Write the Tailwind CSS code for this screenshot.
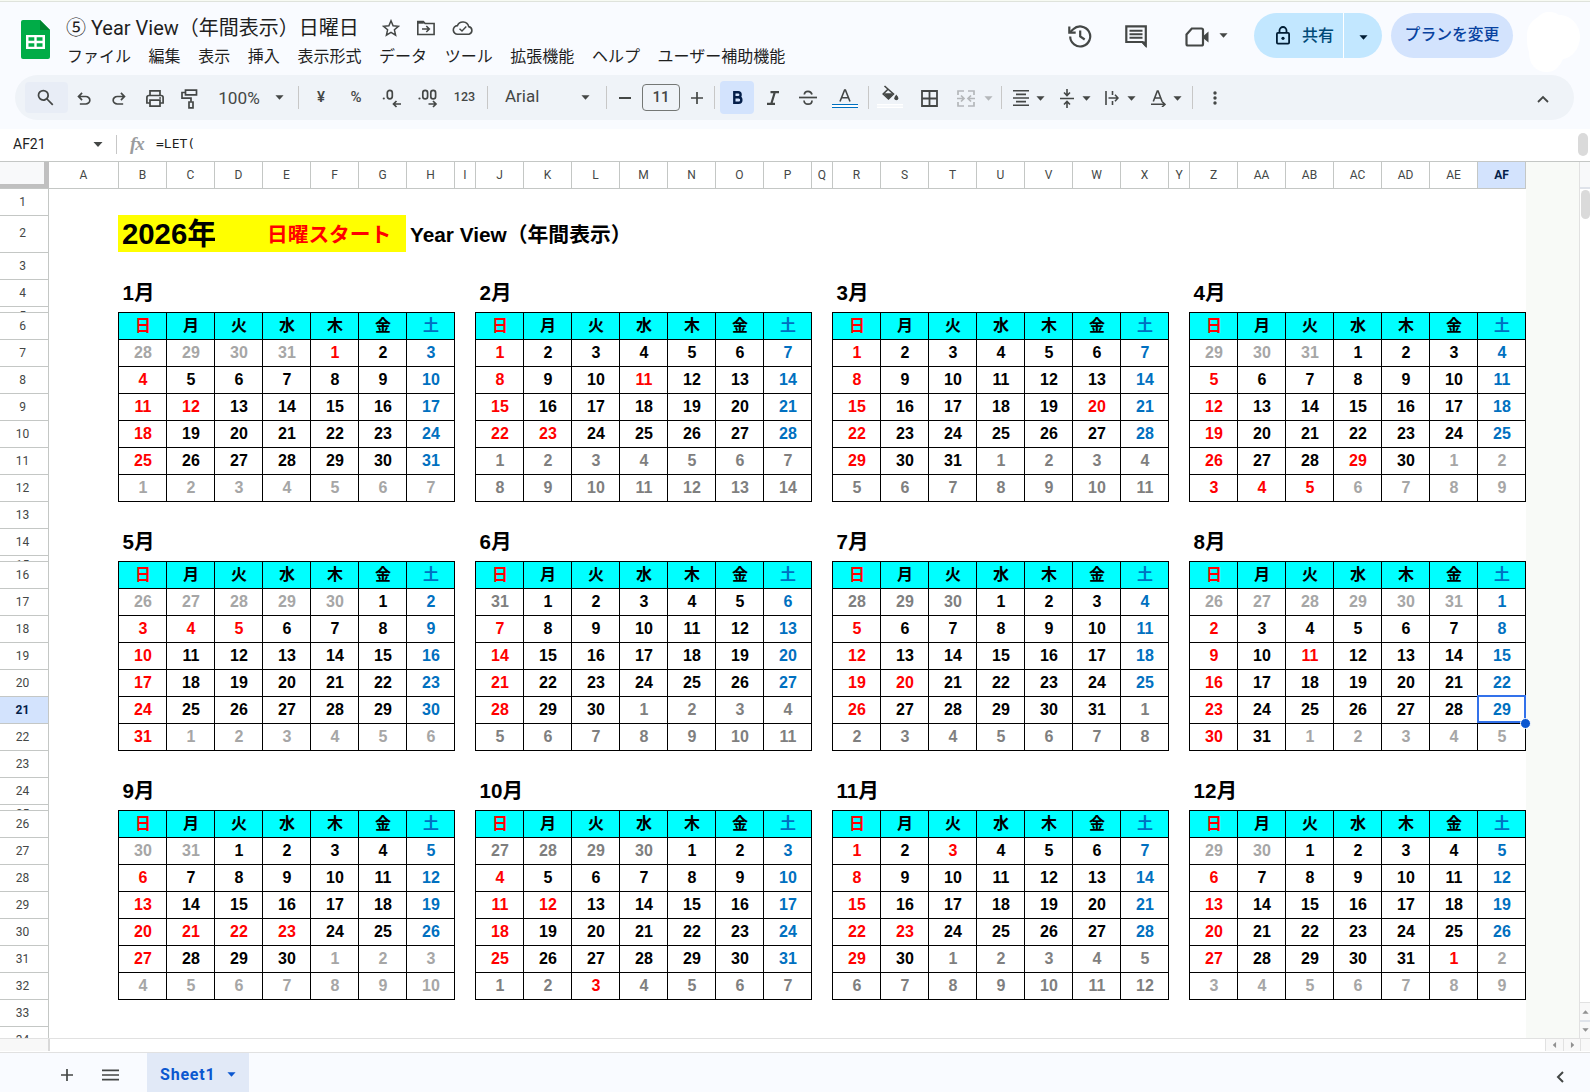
<!DOCTYPE html>
<html lang="ja">
<head>
    <meta charset="UTF-8">
    <meta name="viewport" content="width=device-width, initial-scale=1.0">
    <title>⑤ Year View（年間表示）日曜日</title>
    <script src="https://cdn.jsdelivr.net/npm/@tailwindcss/browser@4"></script>
</head>
<body class="w-[1590px] h-[1092px] overflow-hidden flex flex-col bg-[#f9fbff] text-[#444746] font-[Roboto,'Noto_Sans_CJK_JP',sans-serif]">
    <!-- Shared icon shapes -->
    <svg class="hidden">
        <symbol id="caret" viewBox="0 0 10 5"><path d="M0.5 0h9L5 5z" fill="currentColor"/></symbol>
    </svg>

    <!-- Title and menus -->
    <header class="h-[75px] shrink-0 border-t border-[#f7faf3] flex">
        <div class="w-full border-t border-[#dfe3dc] flex items-start">
            <svg class="ml-[21px] mt-[18px] w-[29px] h-[39px] shrink-0" viewBox="0 0 29 39">
                <path d="M2 0h17l10 10v27a2 2 0 0 1-2 2H2a2 2 0 0 1-2-2V2a2 2 0 0 1 2-2z" fill="#00ac47"/>
                <path d="M19 0l10 10H19z" fill="#00832d"/>
                <path d="M5 15h19v14H5zM7.500 17.200v3.600h5.800v-3.600zM15.700 17.200v3.600h5.800v-3.600zM7.500 23.200v3.600h5.800v-3.600zM15.700 23.200v3.600h5.800v-3.600z" fill="#fff" fill-rule="evenodd"/>
            </svg>
            <div class="ml-[16px] mt-[11px] flex flex-col">
                <div class="flex items-center h-[30px]">
                    <h1 class="w-[310px] text-[20px] leading-[30px] text-[#1f1f1f] whitespace-nowrap">⑤ Year View（年間表示）日曜日</h1>
                    <svg class="ml-[6px] w-[18px] h-[18px]" viewBox="0 0 18 18" fill="none" stroke="currentColor" stroke-width="1.500"><path d="M9 1.800l2.100 5 5.300.5-4 3.500 1.200 5.300L9 13.300l-4.600 2.800 1.200-5.300-4-3.500 5.300-.5z"/></svg>
                    <svg class="ml-[16px] w-[20px] h-[18px]" viewBox="0 0 20 18" fill="none" stroke="currentColor" stroke-width="1.600"><path d="M1.800 2.500h5.500l1.800 2h9v11H1.800z"/><path d="M1.800 3.700h6" stroke-width="2"/><path d="M6 10h7M10.300 7l3 3-3 3"/></svg>
                    <svg class="ml-[16px] w-[22px] h-[16px]" viewBox="0 0 22 16" fill="none" stroke="currentColor" stroke-width="1.600"><path d="M5.800 14.200a4.300 4.300 0 0 1-.4-8.600A6 6 0 0 1 16.700 6.600a3.900 3.900 0 0 1 .3 7.600z"/><path d="M7.500 8.700l2.500 2.400 4.300-4.500" stroke-width="1.400"/></svg>
                </div>
                <nav class="flex gap-[17.600px] pl-px pt-px text-[16px] leading-[26px] text-[#1f1f1f] whitespace-nowrap">
                    <span>ファイル</span><span>編集</span><span>表示</span><span>挿入</span><span>表示形式</span><span>データ</span><span>ツール</span><span>拡張機能</span><span>ヘルプ</span><span>ユーザー補助機能</span>
                </nav>
            </div>
            <div class="ml-auto flex items-center h-[45px] mt-[11px]">
                <svg class="w-[24px] h-[24px]" viewBox="0 0 24 24" fill="none" stroke="currentColor" stroke-width="2.200"><path d="M2.200 12.500a10 10 0 1 0 3-7.200L2 8.300"/><path d="M1.300 2.500v6.200h6.400"/><path d="M12.200 6.500v6l4.500 3"/></svg>
                <svg class="ml-[32px] w-[24px] h-[24px]" viewBox="0 0 24 24" fill="none" stroke="currentColor" stroke-width="2.200"><path d="M2.300 2.300h19.500v19L18.500 18H2.300z"/><path d="M21.800 23.500v-6h-5z" fill="currentColor" stroke="none"/><path d="M5.500 6.700h13M5.500 10.200h13M5.500 13.700h13" stroke-width="1.900"/></svg>
                <svg class="ml-[37px] mt-[2px] w-[24px] h-[20px]" viewBox="0 0 24 20" fill="none" stroke="currentColor" stroke-width="2.200"><path d="M1.500 7.500l5.300-6h9.700q1.500 0 1.500 1.500v14q0 1.500-1.500 1.500H3q-1.500 0-1.500-1.500z"/><path d="M18 9.200l5.500-4.700v11L18 11z" fill="currentColor" stroke="none"/></svg>
                <svg class="ml-[10px] w-[9px] h-[5px]"><use href="#caret"/></svg>
                <div class="ml-[26px] h-[45px] w-[128px] flex rounded-full bg-[#c2e7ff] overflow-hidden">
                    <div class="w-[90px] border-r border-white flex items-center pl-[21px] text-[#004a77] text-[16px]">
                        <svg class="w-[16px] h-[19px] text-[#001d35]" viewBox="0 0 16 19" fill="none" stroke="currentColor" stroke-width="1.800"><rect x="1.900" y="6.900" width="12.200" height="10.700" rx="1"/><path d="M4.500 7V4.500a3.500 3.500 0 0 1 7 0V7"/><circle cx="8" cy="12.300" r="1.600" fill="currentColor" stroke="none"/></svg>
                        <span class="ml-[11px] font-medium">共有</span>
                    </div>
                    <div class="flex items-center pl-[15px] pt-[3px] text-[#001d35]"><svg class="w-[9px] h-[5px]"><use href="#caret"/></svg></div>
                </div>
                <div class="ml-[9px] h-[45px] w-[122px] rounded-full bg-[#d3e3fd] text-[#0842a0] text-[15.800px] font-medium flex items-center justify-center whitespace-nowrap pb-[2px]">プランを変更</div>
                <svg class="ml-[14px] mr-[10px] mt-[7px] w-[53px] h-[62px] -mb-[7px]" viewBox="0 0 53 62"><path d="M0 24C0 13 5 9 11 5c6-7 16-6 21-2 12 0 21 10 21 21 0 13-8 22-17 23-4 9-9 13-16 13C8 60 2 52 2 40 0 35 0 30 0 24z" fill="#fff"/></svg>
            </div>
        </div>
    </header>

    <!-- Toolbar -->
    <div class="h-[54px] shrink-0 pl-[15px] pr-[16px]">
        <div class="h-[45px] rounded-full bg-[#eff3f8] flex items-center pl-[10px]">
            <div class="w-[43px] h-[31px] rounded bg-[#e8edf6] flex items-center justify-center pr-[3px]">
                <svg class="w-[21px] h-[21px]" viewBox="0 -960 960 960" fill="currentColor"><path d="M784-120 532-372q-30 24-69 38t-83 14q-109 0-184.500-75.500T120-580q0-109 75.500-184.500T380-840q109 0 184.500 75.500T640-580q0 44-14 83t-38 69l252 252-56 56ZM380-400q75 0 127.500-52.500T560-580q0-75-52.500-127.500T380-760q-75 0-127.500 52.500T200-580q0 75 52.500 127.500T380-400Z"/></svg>
            </div>
            <div class="w-[32px] flex justify-center pt-[3px]"><svg class="w-[20px] h-[20px]" viewBox="0 -960 960 960" fill="currentColor"><path d="M280-200v-80h284q63 0 109.500-40T720-420q0-60-46.500-100T564-560H312l104 104-56 56-200-200 200-200 56 56-104 104h252q97 0 169.500 63T800-420q0 94-72.500 157T564-200H280Z"/></svg></div>
            <div class="w-[37px] flex justify-center pt-[3px]"><svg class="w-[20px] h-[20px] -scale-x-100" viewBox="0 -960 960 960" fill="currentColor"><path d="M280-200v-80h284q63 0 109.500-40T720-420q0-60-46.500-100T564-560H312l104 104-56 56-200-200 200-200 56 56-104 104h252q97 0 169.500 63T800-420q0 94-72.500 157T564-200H280Z"/></svg></div>
            <div class="w-[36px] flex justify-center pt-[2px]"><svg class="w-[18px] h-[17px]" viewBox="0 0 18 17" fill="none" stroke="currentColor" stroke-width="1.700"><path d="M4 5V.900h10V5M4 13H.900V7.500Q.900 5.500 3 5.500h12q2.100 0 2.100 2V13H14"/><path d="M4 10.200h10v5.900H4z"/><path d="M13.200 8h1.800"/></svg></div>
            <div class="w-[34px] flex justify-center pt-[2px] pr-px"><svg class="w-[17px] h-[20px]" viewBox="0 0 17 20" fill="none" stroke="currentColor" stroke-width="1.700"><path d="M4.500 1.200h11v4.600h-11z"/><path d="M4.500 3.500H1v5.700h9v3.600"/><path d="M8 13h4v5.800H8z"/></svg></div>
            <div class="w-[63px] pl-px pt-[3px] text-center text-[17.200px]">100%</div>
            <div class="w-[18px] flex justify-center"><svg class="w-[9px] h-[5px]"><use href="#caret"/></svg></div>
            <div class="ml-[10px] w-px h-[23px] bg-[#c7c7c7]"></div>
            <div class="ml-[5px] w-[34px] text-center text-[15px] font-medium">¥</div>
            <div class="w-[36px] text-center text-[15px] font-medium">%</div>
            <div class="w-[35px] flex justify-center"><svg class="w-[20px] h-[20px]" viewBox="0 0 20 20" fill="none" stroke="currentColor" stroke-width="1.700"><circle cx="1.800" cy="10.500" r="1.100" fill="currentColor" stroke="none"/><rect x="5.300" y="2.300" width="5" height="8.500" rx="2.500"/><path d="M19 16h-7M14.500 13l-3 3 3 3"/></svg></div>
            <div class="w-[38px] flex justify-center"><svg class="w-[20px] h-[20px]" viewBox="0 0 20 20" fill="none" stroke="currentColor" stroke-width="1.700"><circle cx="1.500" cy="10.500" r="1.100" fill="currentColor" stroke="none"/><rect x="4.800" y="2.300" width="4.800" height="8.500" rx="2.400"/><rect x="12.800" y="2.300" width="4.800" height="8.500" rx="2.400"/><path d="M10.500 16h7M15 13l3 3-3 3"/></svg></div>
            <div class="w-[35px] text-center text-[12.500px] font-medium">123</div>
            <div class="ml-[5px] w-px h-[23px] bg-[#c7c7c7]"></div>
            <div class="ml-[17px] w-[71px] text-[17px] pb-[2px]">Arial</div>
            <div class="w-[18px] flex justify-center"><svg class="w-[9px] h-[5px]"><use href="#caret"/></svg></div>
            <div class="ml-[12px] w-px h-[23px] bg-[#c7c7c7]"></div>
            <div class="w-[35px] flex justify-center"><div class="w-[12px] h-[2px] bg-[#444746]"></div></div>
            <div class="w-[38px] h-[27px] border border-[#747775] rounded-[4px] flex items-center justify-center text-[15px] font-medium">11</div>
            <svg class="ml-[11px] w-[12px] h-[12px]" viewBox="0 0 12 12" stroke="currentColor" stroke-width="1.700"><path d="M0 6h12M6 0v12"/></svg>
            <div class="ml-[11px] w-px h-[23px] bg-[#c7c7c7]"></div>
            <div class="ml-[5px] w-[34px] h-[33px] rounded bg-[#d3e3fd] text-[#041e49] flex items-center justify-center pl-px"><svg class="w-[10px] h-[13px]" viewBox="0 0 10 13" fill="none" stroke="currentColor" stroke-width="2.400"><path d="M1.300 1.200h3.800a2.500 2.500 0 0 1 0 5H1.300zM1.300 6.200h4.300a2.700 2.700 0 0 1 0 5.500H1.300z"/></svg></div>
            <div class="ml-px w-[36px] flex justify-center pt-px"><svg class="w-[12px] h-[14px]" viewBox="0 0 12 14" fill="none" stroke="currentColor" stroke-width="2.200"><path d="M3.500 1.200H12M0 12.800h8M7.800 1.200l-3.500 11.600"/></svg></div>
            <div class="w-[34px] flex justify-center pt-px"><svg class="w-[18px] h-[16px]" viewBox="0 0 18 16" fill="none" stroke="currentColor" stroke-width="1.700"><path d="M0 7.500h18"/><path d="M13 4.500C12.500 2.300 11 1.300 9 1.300S5.500 2.300 5.300 4.500M5 10.500c.2 2.600 1.800 3.700 4 3.700s4-1.200 4-3.700"/></svg></div>
            <div class="w-[40px] flex flex-col items-center pt-[2px]"><svg class="w-[12px] h-[13px]" viewBox="0 0 12 13" fill="none" stroke="currentColor" stroke-width="1.600"><path d="M1 12.500L5.600 1h.8L11 12.500M2.700 8.800h6.600"/></svg><div class="mt-[2px] w-[26px] h-[4px] border-y border-[#0070c0] bg-white"></div></div>
            <div class="ml-[3px] w-px h-[23px] bg-[#c7c7c7]"></div>
            <div class="w-[42px] flex flex-col items-center pb-[2px]"><svg class="w-[17px] h-[16px]" viewBox="0 0 17 16"><path d="M2.500 1l9 8-5 5-5.300-5L6.500 3.800" fill="none" stroke="currentColor" stroke-width="1.600"/><path d="M1.500 8.200h10L6.500 14z" fill="currentColor"/><path d="M14.300 9.500c1.300 1.700 2 2.700 2 3.700a2 2 0 0 1-4 0c0-1 .7-2 2-3.700z" fill="currentColor"/></svg><div class="mt-[3px] w-[26px] h-[4px] border-y border-white bg-[#f6f8fb]"></div></div>
            <div class="w-[36px] flex justify-center pt-px"><svg class="w-[17px] h-[17px]" viewBox="0 0 17 17" fill="none" stroke="currentColor" stroke-width="1.800"><path d="M1 1h15v15H1zM8.500 1v15M1 8.500h15"/></svg></div>
            <div class="w-[37px] flex justify-center pt-px text-[#b4b7ba]"><svg class="w-[18px] h-[17px]" viewBox="0 0 18 17" fill="none" stroke="currentColor" stroke-width="1.700"><path d="M7 1H1v4M1 12v4h6M11 1h6v4M17 12v4h-6M0 8.500h6.500M4 5.500l3 3-3 3M18 8.500h-6.500M14 5.500l-3 3 3 3"/></svg></div>
            <svg class="mt-px w-[9px] h-[5px] text-[#b4b7ba]"><use href="#caret"/></svg>
            <div class="ml-[8px] w-px h-[23px] bg-[#c7c7c7]"></div>
            <div class="ml-[4px] w-[30px] flex justify-center pt-px"><svg class="w-[16px] h-[16px]" viewBox="0 0 16 16" stroke="currentColor" stroke-width="1.600"><path d="M0 .800h16M3 4.400h10M0 8h16M3 11.600h10M0 15.200h16"/></svg></div>
            <svg class="mt-px w-[9px] h-[5px]"><use href="#caret"/></svg>
            <div class="ml-[6px] w-[31px] flex justify-center pt-px"><svg class="w-[14px] h-[19px]" viewBox="0 0 14 19" fill="none" stroke="currentColor" stroke-width="1.600"><path d="M0 9.500h14M7 0v5.500M4 3.500l3 3 3-3M7 19v-5.500M4 15.500l3-3 3 3"/></svg></div>
            <svg class="mt-px w-[9px] h-[5px]"><use href="#caret"/></svg>
            <div class="ml-[6px] w-[30px] flex justify-center pt-px"><svg class="w-[14px] h-[14px]" viewBox="0 0 14 14" fill="none" stroke="currentColor" stroke-width="1.600"><path d="M1 0v14M3.500 7h9M10 3.800L13 7l-3 3.200M7.500 0v4M7.500 10v4"/></svg></div>
            <svg class="mt-px w-[9px] h-[5px]"><use href="#caret"/></svg>
            <div class="ml-[7px] w-[30px] flex justify-center pt-px"><svg class="w-[15px] h-[17px]" viewBox="0 0 15 17" fill="none" stroke="currentColor" stroke-width="1.600"><path d="M2.300 11.500L6.300 1h.8l4 10.500M3.800 8h5.800M0 14.300h13.500M11 11.500l3 2.800-3 2.700"/></svg></div>
            <svg class="mt-px w-[9px] h-[5px]"><use href="#caret"/></svg>
            <div class="ml-[10px] w-px h-[23px] bg-[#c7c7c7]"></div>
            <div class="w-[44px] flex justify-center pt-px"><svg class="w-[4px] h-[14px]" viewBox="0 0 4 14" fill="currentColor"><circle cx="2" cy="2" r="1.700"/><circle cx="2" cy="7" r="1.700"/><circle cx="2" cy="12" r="1.700"/></svg></div>
            <svg class="ml-auto mr-[25px] mt-[2px] w-[12px] h-[8px]" viewBox="0 0 12 8" fill="none" stroke="currentColor" stroke-width="1.800"><path d="M1 7l5-5 5 5"/></svg>
        </div>
    </div>

    <!-- Formula bar -->
    <div class="h-[32px] shrink-0 bg-white flex items-center pb-[2px] pr-[2px]">
        <div class="ml-[13px] w-[80px] text-[14px] text-[#1f1f1f]">AF21</div>
        <svg class="mt-px w-[10px] h-[5px]"><use href="#caret"/></svg>
        <div class="ml-[13px] w-px h-[19px] bg-[#c7c7c7]"></div>
        <div class="ml-[13px] w-[26px] font-['Liberation_Serif',serif] italic font-bold text-[19px] leading-[20px] text-[#9a9c9e] tracking-[-1px]">fx</div>
        <div class="text-[13px] text-[#1f1f1f] font-['DejaVu_Sans_Mono',monospace]">=LET(</div>
        <div class="ml-auto w-[10px] h-[23px] mt-px rounded-full bg-[#dadada]"></div>
    </div>

    <!-- Sheet -->
    <main class="h-[878px] shrink-0 flex border-t border-[#c4c7c5] border-b border-b-[#e1e1e1] bg-white overflow-hidden">
        <div class="w-[49px] shrink-0 border-r border-[#c4c7c5] text-[12px]">
            <div class="h-[26px] -mr-px bg-[#f8f9fa] border-r-[5px] border-b-[4px] border-[#c0c0c0]"></div>
            <div id="rowHeaders" class="border-t border-[#c4c7c5]"></div>
        </div>
        <div class="w-[1477px] shrink-0">
            <div id="colHeaders" class="h-[27px] flex border-b border-[#c4c7c5] text-[12px] leading-[24px]"></div>
            <div class="pl-[69px] pt-[26px] font-['Liberation_Sans','Noto_Sans_CJK_JP',sans-serif] font-bold text-black whitespace-nowrap">
                <div class="h-[37px] flex items-center text-[21px]">
                    <div class="w-[288px] h-full bg-[#ffff00] flex items-center">
                        <div class="w-[97px] h-full pl-[4px] overflow-hidden text-[29.330px] leading-[38px]">2026年</div>
                        <div class="ml-[52px] pt-[3px] text-[20.700px] text-[#ff0000]">日曜スタート</div>
                    </div>
                    <div class="ml-[4px] pt-[3px] text-[20.800px]">Year View（年間表示）</div>
                </div>
                <div id="months" class="mt-[28px] grid grid-cols-[repeat(4,337px)] gap-x-[20px] gap-y-[27px]"></div>
            </div>
        </div>
        <div class="w-[53px] shrink-0 bg-[#f8faf7]"></div>
        <div class="w-[11px] shrink-0 border-l border-[#e1e1e1] flex flex-col items-center">
            <div class="w-full h-[27px] bg-[#f8f9fa] border-b-2 border-[#dfe3ea]"></div>
            <div class="ml-px mt-px w-[9px] h-[29px] rounded-full bg-[#dadada]"></div>
            <div class="mt-auto w-full h-[18px] border-t border-[#e1e1e1] bg-[#f8f8f8] flex items-center justify-center text-[#919191]"><svg class="w-[7px] h-[4px] rotate-180"><use href="#caret"/></svg></div>
            <div class="w-full h-[18px] border-t-2 border-[#dfe3ea] bg-[#f8f8f8] flex items-center justify-center text-[#919191]"><svg class="w-[7px] h-[4px]"><use href="#caret"/></svg></div>
        </div>
    </main>

    <!-- Horizontal scroll track -->
    <div class="h-[14px] shrink-0 flex bg-white border-b border-[#e1e1e1] text-[#919191]">
        <div class="w-[50px] h-[12px] bg-[#f8f8f8] border-r-2 border-[#d9d9d9]"></div>
        <div class="ml-auto w-[18px] h-[12px] border-l border-[#e1e1e1] bg-[#f8f8f8] flex items-center justify-center"><svg class="w-[7px] h-[4px] shrink-0 rotate-90"><use href="#caret"/></svg></div>
        <div class="w-[18px] h-[12px] border-x border-[#e1e1e1] bg-[#f8f8f8] flex items-center justify-center"><svg class="w-[7px] h-[4px] shrink-0 -rotate-90"><use href="#caret"/></svg></div>
        <div class="w-[9px] h-[12px] bg-[#f8f8f8]"></div>
    </div>

    <!-- Sheet tabs -->
    <footer class="h-[39px] shrink-0 flex items-center">
        <svg class="ml-[61px] mt-[4px] w-[12px] h-[12px]" viewBox="0 0 12 12" stroke="currentColor" stroke-width="1.700"><path d="M0 6h12M6 0v12"/></svg>
        <svg class="ml-[29px] mt-[4px] w-[17px] h-[12px]" viewBox="0 0 17 12" stroke="currentColor" stroke-width="1.700"><path d="M0 1.300h17M0 6h17M0 10.700h17"/></svg>
        <div class="ml-[28px] w-[102px] h-full bg-[#e1e9f7] text-[#0b57d0] flex items-center pt-[4px] pl-[13px]">
            <span class="w-[67px] text-[16px] font-bold tracking-[0.800px]">Sheet1</span>
            <svg class="w-[9px] h-[5px]"><use href="#caret"/></svg>
        </div>
        <svg class="ml-auto mr-[26px] mt-[8px] w-[8px] h-[12px]" viewBox="0 0 8 12" fill="none" stroke="currentColor" stroke-width="2"><path d="M7 1L2 6l5 5"/></svg>
    </footer>

    <script>
        const YEAR = 2026;
        const weekdays = ['日', '月', '火', '水', '木', '金', '土'];
        const holidays = ['1/1', '1/12', '2/11', '2/23', '3/20', '4/29', '5/3', '5/4', '5/5', '7/20', '8/11', '9/21', '9/22', '9/23', '10/12', '11/3', '11/23'];

        // Column headers: A is wide, I / Q / Y are narrow spacers
        const columns = 'A B C D E F G H I J K L M N O P Q R S T U V W X Y Z AA AB AC AD AE AF'.split(' ');
        document.getElementById('colHeaders').innerHTML = columns.map(name => {
            let width = 'w-[48px]';
            if (name === 'A') width = 'w-[70px]';
            if (['I', 'Q', 'Y'].includes(name)) width = 'w-[21px]';
            const state = name === 'AF' ? 'bg-[#d3e3fd] font-bold text-[#041e49]' : 'bg-white';
            return `<div class="${width} ${state} shrink-0 border-r border-[#c4c7c5] text-center pt-px">${name}</div>`;
        }).join('');

        // Row headers
        let rows = '';
        for (let r = 1; r <= 34; r++) {
            let height = 'h-[27px] leading-[26px]';
            if (r === 2) height = 'h-[37px] leading-[34px]';
            if ([5, 15, 25].includes(r)) height = 'h-[6px] leading-[19px]';
            const state = r === 21 ? 'bg-[#d3e3fd] font-bold text-[#041e49]' : 'bg-white';
            rows += `<div class="${height} ${state} overflow-hidden border-b border-[#c4c7c5] text-center pr-[3px]">${r}</div>`;
        }
        document.getElementById('rowHeaders').innerHTML = rows;

        function dayColor(date, month) {
            const key = (date.getMonth() + 1) + '/' + date.getDate();
            const before = date < new Date(YEAR, month, 1);
            if (!before && holidays.includes(key)) return 'text-[#ff0000]';
            if (date.getMonth() !== month) {
                // Middle two columns of months use a darker gray
                return month % 4 === 1 || month % 4 === 2 ? 'text-[#7f7f7f]' : 'text-[#a6a6a6]';
            }
            if (date.getDay() === 0) return 'text-[#ff0000]';
            if (date.getDay() === 6) return 'text-[#0070c0]';
            return 'text-black';
        }

        // Month blocks
        const cell = 'relative w-[48px] h-[27px] border-r border-b border-black pl-px text-center text-[16px] leading-[25px]';
        let html = '';
        for (let month = 0; month < 12; month++) {
            let cells = weekdays.map((d, i) => {
                const color = i === 0 ? 'text-[#ff0000]' : i === 6 ? 'text-[#0070c0]' : 'text-black';
                return `<div class="${cell} ${color} bg-[#00ffff]">${d}</div>`;
            }).join('');
            const offset = new Date(YEAR, month, 1).getDay();
            for (let i = 0; i < 42; i++) {
                const date = new Date(YEAR, month, 1 - offset + i);
                let mark = '';
                if (month === 7 && date.getMonth() === 7 && date.getDate() === 29) {
                    mark = '<div class="absolute z-10 -left-px -top-[2px] w-[49px] h-[28px] border-2 border-[#3271ea]"></div>'
                        + '<div class="absolute z-20 -right-[6px] -bottom-[6px] w-[11px] h-[11px] rounded-full bg-[#0b57d0] border border-white"></div>';
                }
                cells += `<div class="${cell} ${dayColor(date, month)}">${date.getDate()}${mark}</div>`;
            }
            html += `<section>
                <h2 class="h-[32px] pl-[4.500px] text-[20.600px] leading-[25px]">${month + 1}月</h2>
                <div class="w-[337px] grid grid-cols-[repeat(7,48px)] border-l border-t border-black">${cells}</div>
            </section>`;
        }
        document.getElementById('months').innerHTML = html;
    </script>
</body>
</html>
